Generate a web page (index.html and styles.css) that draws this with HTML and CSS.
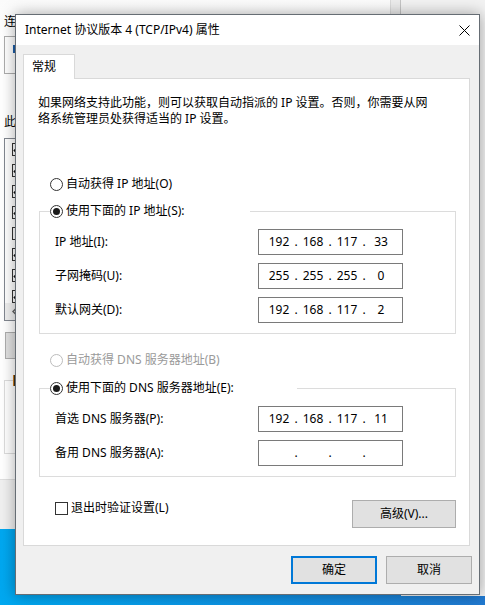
FILE: index.html
```html
<!DOCTYPE html>
<html>
	<head>
		<meta charset="UTF-8">
		<title>Internet 协议版本 4 (TCP/IPv4) 属性</title>
		<link rel="stylesheet" href="styles.css">
	</head>
	<body>
		<div id="desktop">
			<!-- window behind the dialog, only its left edge shows -->
			<div class="win-back">
				<div class="back-body">
					<div class="back-main">
						<p class="back-label first">连</p>
						<div class="adapter"><i class="adapter-icon"></i></div>
						<p class="back-label second">此</p>
						<div class="listbox">
							<ul class="items">
								<li><i class="chk on"></i></li>
								<li><i class="chk on"></i></li>
								<li><i class="chk on"></i></li>
								<li><i class="chk on"></i></li>
								<li><i class="chk"></i></li>
								<li><i class="chk on"></i></li>
								<li><i class="chk on"></i></li>
								<li><i class="chk on"></i></li>
							</ul>
							<div class="hscroll">
								<svg width="6" height="9" viewBox="0 0 6 9"><path d="M5 0.5 L1 4.5 L5 8.5" fill="none" stroke="#606060" stroke-width="1.4"/></svg>
							</div>
						</div>
						<div class="back-btn"></div>
						<fieldset class="back-group"><legend><i class="legend-mark"></i></legend></fieldset>
					</div>
					<div class="back-strip"></div>
				</div>
				<div class="back-foot"></div>
			</div>
			<div class="win-right"></div>

			<!-- the dialog -->
			<div class="dialog">
				<div class="titlebar">
					<span class="title">Internet 协议版本 4 (TCP/IPv4) 属性</span>
					<svg class="close" width="11" height="11" viewBox="0 0 11 11"><path d="M0.5 0.5 L10.5 10.5 M10.5 0.5 L0.5 10.5" stroke="#000" stroke-width="1"/></svg>
				</div>
				<div class="tabs"><div class="tab">常规</div></div>
				<div class="panel">
					<p class="intro">如果网络支持此功能，则可以获取自动指派的 IP 设置。否则，你需要从网<br>络系统管理员处获得适当的 IP 设置。</p>

					<div class="opt first"><i class="radio"></i>自动获得 IP 地址(O)</div>
					<fieldset class="group">
						<legend class="ip-legend"><i class="radio on"></i>使用下面的 IP 地址(S):</legend>
						<div class="row"><label>IP 地址(I):</label>
							<div class="ip"><span class="f">192</span><span class="d">.</span><span class="f">168</span><span class="d">.</span><span class="f">117</span><span class="d">.</span><span class="f">33</span></div>
						</div>
						<div class="row"><label>子网掩码(U):</label>
							<div class="ip"><span class="f">255</span><span class="d">.</span><span class="f">255</span><span class="d">.</span><span class="f">255</span><span class="d">.</span><span class="f">0</span></div>
						</div>
						<div class="row"><label>默认网关(D):</label>
							<div class="ip"><span class="f">192</span><span class="d">.</span><span class="f">168</span><span class="d">.</span><span class="f">117</span><span class="d">.</span><span class="f">2</span></div>
						</div>
					</fieldset>

					<div class="opt disabled"><i class="radio off"></i>自动获得 DNS 服务器地址(B)</div>
					<fieldset class="group dns">
						<legend class="dns-legend"><i class="radio on"></i>使用下面的 DNS 服务器地址(E):</legend>
						<div class="row"><label>首选 DNS 服务器(P):</label>
							<div class="ip"><span class="f">192</span><span class="d">.</span><span class="f">168</span><span class="d">.</span><span class="f">117</span><span class="d">.</span><span class="f">11</span></div>
						</div>
						<div class="row"><label>备用 DNS 服务器(A):</label>
							<div class="ip"><span class="f"></span><span class="d">.</span><span class="f"></span><span class="d">.</span><span class="f"></span><span class="d">.</span><span class="f"></span></div>
						</div>
					</fieldset>

					<div class="foot">
						<div class="check"><i class="box"></i>退出时验证设置(L)</div>
						<div class="btn adv">高级(V)...</div>
					</div>
				</div>
				<div class="actions">
					<div class="btn default">确定</div>
					<div class="btn">取消</div>
				</div>
			</div>
		</div>
	</body>
</html>
```

FILE: styles.css
```css
*{
	margin:0;
	padding:0;
	box-sizing:border-box;
}
ul,li{
	list-style:none;
}
body{
	font:12px/16px "Noto Sans","Noto Sans CJK SC",sans-serif;
	color:#000;
}
#desktop{
	position:relative;
	width:485px;
	height:605px;
	overflow:hidden;
	background:linear-gradient(90deg,#00a8f0 0%,#0e90e2 55%,#2179d0 100%);
}

/* back window */
.win-back{
	position:absolute;
	left:0;
	top:0;
	width:401px;
	height:529px;
	display:flex;
	flex-direction:column;
	background:linear-gradient(#fbfbfb,#fff 40px);
}
.back-body{
	display:flex;
	height:480px;
	border-bottom:1px solid #dfdfdf;
}
.back-main{
	flex:1;
	padding-left:4px;
	overflow:hidden;
	white-space:nowrap;
}
.back-strip{
	width:11px;
	background:#ececec;
	border-left:1px solid #dadada;
	border-right:1px solid #c4c4c4;
}
.back-foot{
	flex:1;
	background:#f0f0f0;
}
.back-label.first{
	margin-top:14px;
}
.back-label.second{
	margin-top:40px;
}
.adapter{
	margin-top:6px;
	height:38px;
	width:370px;
	border:1px solid #adadad;
	display:flex;
	align-items:flex-start;
	padding:8px 0 0 8px;
}
.adapter-icon{
	width:16px;
	height:8px;
	background:#1d5ea8;
}
.listbox{
	margin-top:8px;
	width:370px;
	height:183px;
	border:1px solid #828790;
}
.items{
	height:164px;
	overflow:hidden;
}
.items li{
	height:21px;
	display:flex;
	align-items:center;
	padding-left:7px;
}
.chk{
	width:13px;
	height:13px;
	border:1px solid #333;
	background:#fff;
	position:relative;
}
.chk.on::after{
	content:"";
	position:absolute;
	left:3px;
	top:0;
	width:4px;
	height:8px;
	border:solid #111;
	border-width:0 2px 2px 0;
	transform:rotate(45deg);
}
.hscroll{
	height:17px;
	background:#f0f0f0;
	display:flex;
	align-items:center;
	padding-left:7px;
}
.back-btn{
	margin:11px 0 0 1px;
	width:90px;
	height:27px;
	background:#e1e1e1;
	border:1px solid #adadad;
}
.back-group{
	margin-top:13px;
	width:370px;
	height:82px;
	border:1px solid #dcdcdc;
	padding:0 0 0 8px;
}
.back-group legend{
	padding:0;
	height:16px;
	display:flex;
	align-items:center;
}
.legend-mark{
	width:3px;
	height:11px;
	background:#3a3020;
	border-left:1px solid #d08020;
}
.win-right{
	position:absolute;
	left:401px;
	top:0;
	width:84px;
	height:596px;
	background:#f2f2f2;
}

/* dialog */
.dialog{
	position:absolute;
	left:15px;
	top:14px;
	width:465px;
	background:#f0f0f0;
	border:1px solid #666d74;
	box-shadow:0 0 14px rgba(0,0,0,0.35);
}
.titlebar{
	height:30px;
	background:#fff;
	display:flex;
	align-items:center;
	justify-content:space-between;
	padding:0 9px;
}
.tabs{
	display:flex;
	padding:9px 0 0 7px;
}
.tab{
	width:52px;
	height:25px;
	margin-bottom:-1px;
	padding-left:8px;
	line-height:23px;
	background:#fff;
	border:1px solid #d9d9d9;
	border-bottom:none;
	position:relative;
	z-index:1;
}
.panel{
	margin:0 9px 0 7px;
	height:468px;
	background:#fff;
	border:1px solid #d9d9d9;
	padding-top:16px;
}
.intro{
	margin-left:14px;
}
.opt{
	display:flex;
	align-items:center;
	gap:3px;
	margin-left:26px;
}
.opt.first{
	margin-top:49px;
}
.opt.disabled{
	margin-top:18px;
	color:#9a9a9a;
}
.radio{
	width:13px;
	height:13px;
	border:1px solid #333;
	border-radius:50%;
	background:#fff;
	display:flex;
	align-items:center;
	justify-content:center;
	flex:none;
}
.radio.on::after{
	content:"";
	width:7px;
	height:7px;
	border-radius:50%;
	background:#1a1a1a;
}
.radio.off{
	border-color:#bcbcbc;
}
.group{
	margin:11px 13px 0 15px;
	border:1px solid #dcdcdc;
	padding:10px 0 10px 15px;
}
.group.dns{
	margin-top:12px;
}
.group legend{
	display:flex;
	align-items:center;
	gap:3px;
	margin-left:-5px;
	padding:0;
}
.ip-legend{
	width:200px;
}
.dns-legend{
	width:247px;
}
.row{
	display:flex;
	align-items:center;
	height:26px;
}
.row+.row{
	margin-top:8px;
}
.row label{
	width:203px;
}
.ip{
	width:145px;
	height:26px;
	border:1px solid #7a7a7a;
	background:#fff;
	display:flex;
	align-items:center;
	padding-left:7px;
}
.ip .f{
	width:26px;
	text-align:center;
}
.ip .d{
	width:8px;
	text-align:center;
}
.foot{
	display:flex;
	justify-content:space-between;
	align-items:flex-start;
	margin:23px 13px 0 31px;
}
.check{
	display:flex;
	align-items:center;
	gap:3px;
}
.box{
	width:13px;
	height:13px;
	border:1px solid #333;
	background:#fff;
}
.btn{
	width:86px;
	height:28px;
	border:1px solid #adadad;
	background:#e1e1e1;
	display:flex;
	align-items:center;
	justify-content:center;
}
.btn.adv{
	width:104px;
}
.btn.default{
	border:2px solid #0078d7;
}
.actions{
	display:flex;
	justify-content:flex-end;
	gap:9px;
	margin:10px 7px 10px 0;
}
```
